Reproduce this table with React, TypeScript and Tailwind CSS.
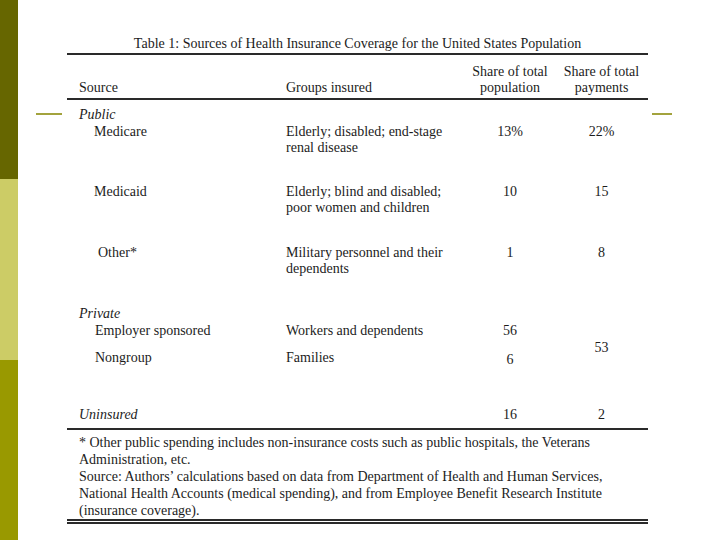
const grid = "grid grid-cols-[207px_179px_90px_93px] pl-3";

const Row = ({
  className,
  source,
  groups,
  pop,
  pay,
  indent = "pl-[15px]",
}: {
  className?: string;
  source: string;
  groups: string[];
  pop: string;
  pay: string;
  indent?: string;
}) => {
  return (
    <div className={`${grid} ${className ?? ""}`}>
      <div className={`${indent} whitespace-nowrap`}>{source}</div>
      <div className="whitespace-nowrap">
        {groups.map((g) => (
          <div key={g}>{g}</div>
        ))}
      </div>
      <div className="text-center">{pop}</div>
      <div className="text-center">{pay}</div>
    </div>
  );
};

const App = () => {
  return (
    <div className="flex h-[540px] w-[720px] overflow-hidden bg-white font-['Liberation_Serif',serif] text-[14px] text-[#1c1c1c]">
      {/* left colour strip */}
      <div className="flex w-[18px] flex-col">
        <div className="h-[179px] bg-[#666600]" />
        <div className="h-[181px] bg-[#cccc66]" />
        <div className="flex-1 bg-[#999900]" />
      </div>

      <div className="w-[49px]">
        <div className="ml-[18px] mt-[113px] h-[2px] w-[26px] bg-[#a3a33d]" />
      </div>

      {/* table */}
      <div className="w-[581px] leading-[16px]">
        <div className="pt-[35px] text-center leading-[17px]">
          Table 1: Sources of Health Insurance Coverage for the United States Population
        </div>
        <div className="mt-[1px] h-[2px] bg-[#2a2a2a]" />

        <div className={`${grid} mt-[9px]`}>
          <div className="pt-[16px]">Source</div>
          <div className="pt-[16px]">Groups insured</div>
          <div className="text-center">
            <div>Share of total</div>
            <div>population</div>
          </div>
          <div className="text-center">
            <div>Share of total</div>
            <div>payments</div>
          </div>
        </div>
        <div className="mt-[2px] h-[2px] bg-[#2a2a2a]" />

        <div className="mt-[7px] pl-3 italic">Public</div>
        <Row
          className="mt-[1px]"
          source="Medicare"
          groups={["Elderly; disabled; end-stage", "renal disease"]}
          pop="13%"
          pay="22%"
        />
        <Row
          className="mt-[28px]"
          source="Medicaid"
          groups={["Elderly; blind and disabled;", "poor women and children"]}
          pop="10"
          pay="15"
        />
        <Row
          className="mt-[29px]"
          source="Other*"
          indent="pl-[19px]"
          groups={["Military personnel and their", "dependents"]}
          pop="1"
          pay="8"
        />

        <div className="mt-[29px] pl-3 italic">Private</div>
        <div className={`${grid} mt-[1px] gap-y-[11px]`}>
          <div className="pl-4">Employer sponsored</div>
          <div>Workers and dependents</div>
          <div className="text-center">56</div>
          <div className="row-span-2 pt-[17px] text-center">53</div>
          <div className="pl-4">Nongroup</div>
          <div>Families</div>
          <div className="pt-[2px] text-center">6</div>
        </div>

        <div className={`${grid} mt-[39px]`}>
          <div className="italic">Uninsured</div>
          <div />
          <div className="text-center">16</div>
          <div className="text-center">2</div>
        </div>
        <div className="mt-[5px] h-[2px] bg-[#2a2a2a]" />

        <div className="mt-[4px] pl-3 leading-[17px]">
          <div>* Other public spending includes non-insurance costs such as public hospitals, the Veterans</div>
          <div>Administration, etc.</div>
          <div>Source: Authors’ calculations based on data from Department of Health and Human Services,</div>
          <div>National Health Accounts (medical spending), and from Employee Benefit Research Institute</div>
          <div>(insurance coverage).</div>
        </div>
        <div className="h-[5px] border-y-2 border-[#2a2a2a]" />
      </div>

      <div className="flex-1">
        <div className="ml-[4px] mt-[113px] h-[2px] w-[20px] bg-[#a3a33d]" />
      </div>
    </div>
  );
};

export default App;
